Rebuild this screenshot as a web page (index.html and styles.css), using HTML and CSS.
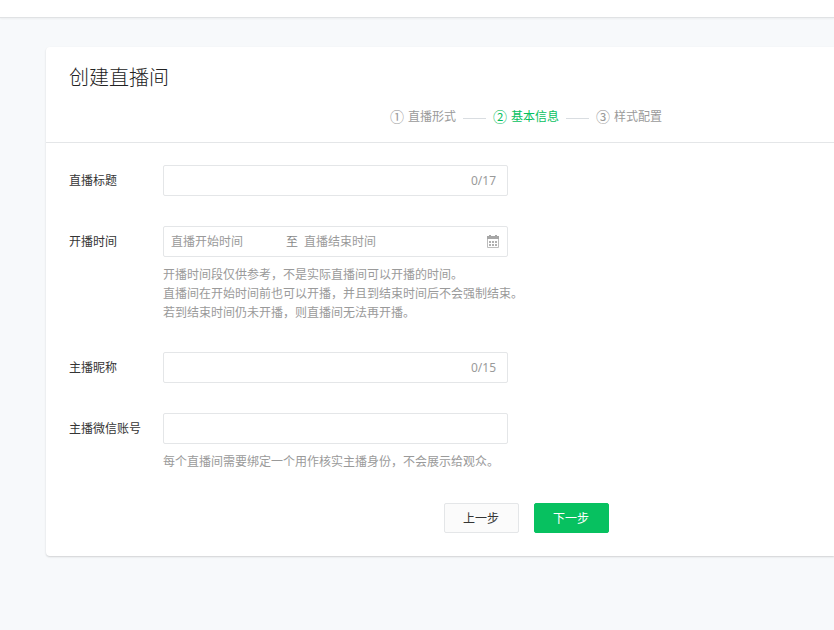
FILE: index.html
```html
<!DOCTYPE html>
<html lang="zh-CN">
<head>
<meta charset="utf-8">
<meta name="viewport" content="width=device-width, initial-scale=1">
<title>创建直播间</title>
<link rel="stylesheet" href="styles.css">
</head>
<body>
<header class="topbar"></header>
<main class="page">
  <section class="card">
    <div class="card-head">
      <h1 class="title">创建直播间</h1>
      <ol class="steps">
        <li class="step"><span class="num">①</span>直播形式</li>
        <li class="step active"><span class="num">②</span>基本信息</li>
        <li class="step"><span class="num">③</span>样式配置</li>
      </ol>
    </div>
    <form class="form">
      <div class="row">
        <label class="label" for="room-title">直播标题</label>
        <div class="field">
          <div class="box"><input class="input" id="room-title" type="text" maxlength="17"><span class="count">0/17</span></div>
        </div>
      </div>
      <div class="row">
        <label class="label" for="start-time">开播时间</label>
        <div class="field">
          <div class="box range">
            <input class="input start" id="start-time" type="text" placeholder="直播开始时间">
            <label class="to" for="end-time">至</label>
            <input class="input" id="end-time" type="text" placeholder="直播结束时间">
            <svg class="calendar" viewBox="0 0 12 13" aria-hidden="true">
              <path fill="#a6a6a6" d="M0 1h2V0h2v1h4V0h2v1h2v3H0z"/>
              <path fill="none" stroke="#bdbdbd" d="M.5 4v8.500h11V4"/>
              <path fill="#b0b0b0" d="M2 6h2v2H2zM5 6h2v2H5zM8 6h2v2H8zM2 9h2v2H2zM5 9h2v2H5zM8 9h2v2H8z"/>
            </svg>
          </div>
          <p class="hint">开播时间段仅供参考，不是实际直播间可以开播的时间。<br>直播间在开始时间前也可以开播，并且到结束时间后不会强制结束。<br>若到结束时间仍未开播，则直播间无法再开播。</p>
        </div>
      </div>
      <div class="row">
        <label class="label" for="nickname">主播昵称</label>
        <div class="field">
          <div class="box"><input class="input" id="nickname" type="text" maxlength="15"><span class="count">0/15</span></div>
        </div>
      </div>
      <div class="row">
        <label class="label" for="wechat">主播微信账号</label>
        <div class="field">
          <div class="box"><input class="input" id="wechat" type="text"></div>
          <p class="hint">每个直播间需要绑定一个用作核实主播身份，不会展示给观众。</p>
        </div>
      </div>
      <div class="actions">
        <button class="btn" type="button">上一步</button>
        <button class="btn primary" type="submit">下一步</button>
      </div>
    </form>
  </section>
</main>
</body>
</html>
```
FILE: styles.css
```css
* {
  box-sizing: border-box;
}

body {
  margin: 0;
  background: #f7f9fb;
  color: #353535;
  font: 400 12px/19px "Noto Sans", "Noto Sans CJK SC", sans-serif;
}

.topbar {
  height: 18px;
  background: #fff;
  border-bottom: 1px solid #e0e2e4;
  box-shadow: 0 1px 2px rgba(0, 0, 0, 0.05);
}

.page {
  padding: 29px 0 29px 46px;
}

.card {
  background: #fff;
  border-radius: 4px 0 0 4px;
  box-shadow: 0 1px 2px rgba(0, 0, 0, 0.16);
}

.card-head {
  padding: 16px 23px;
  border-bottom: 1px solid #e4e6e8;
}

.title {
  margin: 0 0 14px;
  font-size: 20px;
  font-weight: 300;
  line-height: 30px;
  color: #222;
}

.steps {
  display: flex;
  justify-content: center;
  margin: 0;
  padding: 0 0 0 172px;
  list-style: none;
  color: #9a9a9a;
}

.step {
  display: flex;
  align-items: center;
  height: 19px;
}

.step + .step::before {
  content: "";
  width: 23px;
  height: 1px;
  margin: 3px 7px 0;
  background: #d9dde1;
}

.num {
  margin-right: 4px;
  font-size: 14px;
}

.active {
  color: #07c160;
}

.form {
  padding: 22px 23px 23px;
}

.row {
  display: flex;
  margin-bottom: 30px;
}

.label {
  width: 94px;
  line-height: 31px;
}

.field {
  width: 360px;
}

.box {
  display: flex;
  align-items: center;
  width: 345px;
  height: 31px;
  padding: 0 11px 0 7px;
  border: 1px solid #e4e6e8;
  border-radius: 2px;
}

.range {
  padding-right: 8px;
}

.input {
  flex: 1;
  min-width: 0;
  height: 29px;
  padding: 0;
  border: 0;
  outline: 0;
  background: transparent;
  color: inherit;
  font: inherit;
}

.input::placeholder {
  color: #9a9a9a;
  opacity: 1;
}

.start {
  flex: 0 0 115px;
}

.to {
  margin-right: 6px;
  color: #888;
}

.count {
  color: #9a9a9a;
}

.calendar {
  width: 12px;
  height: 13px;
}

.hint {
  margin: 8px 0 0;
  color: #9a9a9a;
  white-space: nowrap;
}

.actions {
  display: flex;
  justify-content: center;
  gap: 15px;
  padding: 2px 0 0 172px;
}

.btn {
  width: 75px;
  height: 30px;
  padding: 0;
  border: 1px solid #e4e6e8;
  border-radius: 2px;
  background: #fbfbfb;
  color: #353535;
  font: inherit;
}

.primary {
  border-color: #07c160;
  background: #07c160;
  color: #fff;
}
```
